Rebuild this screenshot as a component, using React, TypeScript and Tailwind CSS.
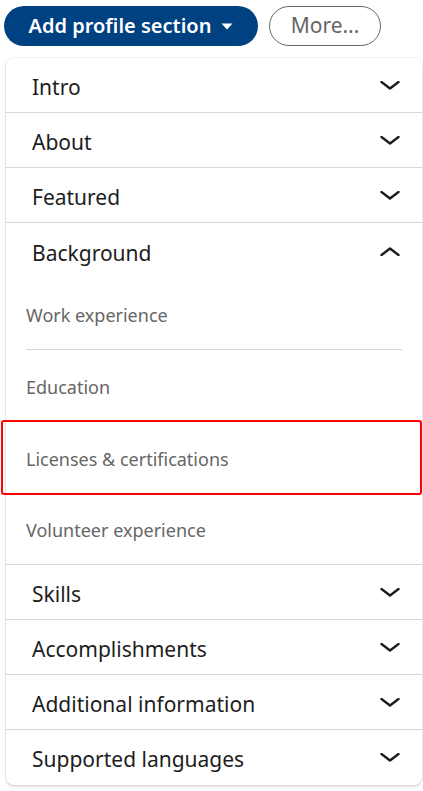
import React from 'react';

const font = { fontFamily: '"Noto Sans", "Open Sans", sans-serif' };

function Chevron({ up = false }: { up?: boolean }) {
  return (
    <svg width="20" height="9" viewBox="0 0 20 9" className="shrink-0">
      <path
        d={up ? 'M1.5 8 L10 1.5 L18.5 8' : 'M1.5 1 L10 7.5 L18.5 1'}
        fill="none"
        stroke="#1d1d1d"
        strokeWidth="2.4"
        strokeLinecap="round"
        strokeLinejoin="round"
      />
    </svg>
  );
}

function Row({ label, up = false, last = false }: { label: string; up?: boolean; last?: boolean }) {
  return (
    <div className={`flex items-center justify-between h-[55px] pl-[26px] pr-[22px] ${last ? '' : 'border-b border-[#dcd6cf]'}`}>
      <span className="text-[21px] leading-none pt-[4px] text-[#1d1d1d]">{label}</span>
      <Chevron up={up} />
    </div>
  );
}

function SubItem({ label, last = false }: { label: string; last?: boolean }) {
  return (
    <div className="mx-[20px]">
      <div className={`flex items-center ${last ? 'h-[70px]' : 'h-[72px] border-b border-[#dcd6cf]'}`}>
        <span className="text-[18px] leading-none pt-[2px] text-[#666666]">{label}</span>
      </div>
    </div>
  );
}

export default function App() {
  return (
    <div className="relative w-[423px] h-[791px] bg-white overflow-hidden" style={font}>
      <div className="flex items-center gap-[11px] pl-[4px] pt-[6px]">
        <button className="h-[40px] w-[254px] rounded-full bg-[#004182] text-white font-semibold text-[20px] flex items-center justify-center gap-[10px]">
          Add profile section
          <svg width="12" height="7" viewBox="0 0 12 7"><path d="M0.5 0.5 H11.5 L6 6.5 Z" fill="white" /></svg>
        </button>
        <button className="h-[40px] w-[112px] rounded-full border border-[#666] text-[#666] text-[21px] flex items-center justify-center">
          More...
        </button>
      </div>

      <div className="ml-[6px] mr-[1px] mt-[12px] rounded-[8px] bg-white shadow-[0_0_0_1px_rgba(0,0,0,0.06),0_2px_3px_rgba(0,0,0,0.12)]">
        <Row label="Intro" />
        <Row label="About" />
        <Row label="Featured" />
        <div className="flex items-center justify-between h-[56px] pl-[26px] pr-[22px]">
          <span className="text-[21px] leading-none pt-[4px] text-[#1d1d1d]">Background</span>
          <Chevron up />
        </div>
        <div className="-mt-[1px]">
          <SubItem label="Work experience" />
          <SubItem label="Education" />
          <SubItem label="Licenses & certifications" />
          <SubItem label="Volunteer experience" last />
        </div>
        <div className="border-t border-[#dcd6cf]" />
        <Row label="Skills" />
        <Row label="Accomplishments" />
        <Row label="Additional information" />
        <Row label="Supported languages" last />
      </div>

      <div className="absolute left-[1px] top-[420px] w-[421px] h-[75px] border-2 border-[#ff0000] rounded-[3px]" />
    </div>
  );
}
